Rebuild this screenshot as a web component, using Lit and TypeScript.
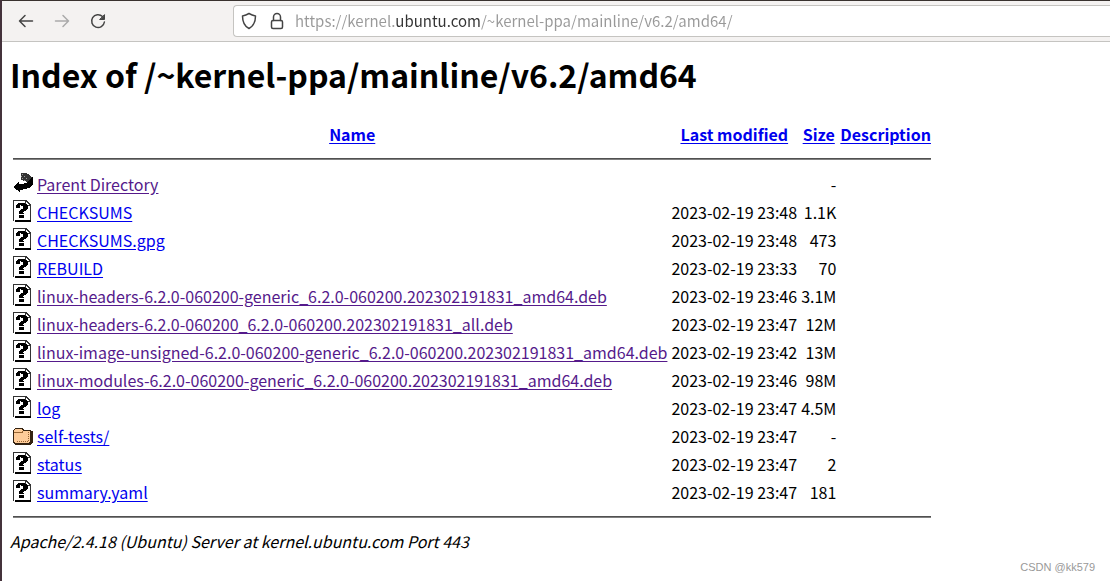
import { LitElement, html, css, svg } from "lit";
import { customElement } from "lit/decorators.js";

interface Entry {
  name: string;
  date: string;
  size: string;
  kind: "back" | "file" | "folder";
  visited?: boolean;
}

const entries: Entry[] = [
  { name: "Parent Directory", date: "", size: "-", kind: "back", visited: true },
  { name: "CHECKSUMS", date: "2023-02-19 23:48", size: "1.1K", kind: "file" },
  { name: "CHECKSUMS.gpg", date: "2023-02-19 23:48", size: "473", kind: "file" },
  { name: "REBUILD", date: "2023-02-19 23:33", size: "70", kind: "file" },
  { name: "linux-headers-6.2.0-060200-generic_6.2.0-060200.202302191831_amd64.deb", date: "2023-02-19 23:46", size: "3.1M", kind: "file", visited: true },
  { name: "linux-headers-6.2.0-060200_6.2.0-060200.202302191831_all.deb", date: "2023-02-19 23:47", size: "12M", kind: "file", visited: true },
  { name: "linux-image-unsigned-6.2.0-060200-generic_6.2.0-060200.202302191831_amd64.deb", date: "2023-02-19 23:42", size: "13M", kind: "file", visited: true },
  { name: "linux-modules-6.2.0-060200-generic_6.2.0-060200.202302191831_amd64.deb", date: "2023-02-19 23:46", size: "98M", kind: "file", visited: true },
  { name: "log", date: "2023-02-19 23:47", size: "4.5M", kind: "file" },
  { name: "self-tests/", date: "2023-02-19 23:47", size: "-", kind: "folder" },
  { name: "status", date: "2023-02-19 23:47", size: "2", kind: "file" },
  { name: "summary.yaml", date: "2023-02-19 23:47", size: "181", kind: "file" },
];

const glyphs = {
  back: svg`
    <path d="M8 1h5l4 2 2 3-2 3-3 1-2-1-4-1z" fill="#333"/>
    <path d="M9 2h1M11 4h1M9 6h1M13 6h1M11 8h1M8 4h1" stroke="#999"/>
    <path d="M0 15l6-5v2h3l6-2 4-5h1v7l-2 3-5 2-6 1v2z" fill="#000"/>`,
  file: svg`
    <path d="M0 0h13l5 5v16H0z" fill="#fff"/>
    <path d="M0 0h13v1H1v20H0z" fill="#333"/>
    <path d="M12 0h2v1h1v1h1v1h1v1h1v17h-1V6h-5V1z" fill="#333"/>
    <path d="M13 2v3h3V4h-1V3h-1V2z" fill="#fff"/>
    <path d="M2 20h16v2H2z" fill="#000"/>
    <path d="M5 3h7v1h2v1h1v4h-1v1h-1v1h-2v1h-1v1h1v1H6v-3h1v-1h1V9h2V6H8V5H7v3H3V5h1V4h1zM6 15h5v3H6z" fill="#000"/>`,
  folder: svg`
    <path d="M2 4h8v1h1v1h7v1h2v12h-1v1h-1v1H2v-1H1v-1H0V6h1V5h1z" fill="#321"/>
    <path d="M2 5h7v1h1v1h7v11h-1v1H2v-1H1V6h1z" fill="#fc9"/>
    <path d="M1 8h8V7h1" fill="none" stroke="#963"/>
    <path d="M15.500 8v10M4 17.500h12" fill="none" stroke="#963" stroke-dasharray="1 1"/>`,
};

@customElement("app-root")
export class AppRoot extends LitElement {
  static styles = css`
    :host {
      display: block;
      box-sizing: border-box;
      min-height: 100vh;
      border-left: 2px solid #44323b;
      background: #fff;
      color: #000;
      font: 16px/24px "Noto Sans CJK SC", sans-serif;
    }
    .toolbar {
      display: flex;
      align-items: center;
      box-sizing: border-box;
      height: 42px;
      padding-left: 12px;
      border-top: 1px solid #39322f;
      border-bottom: 1px solid #c5c4c1;
      background: #f4f2f1;
    }
    .nav {
      width: 24px;
      height: 24px;
      margin-right: 12px;
      padding: 0;
      border: 0;
      background: none;
      color: #444;
    }
    .nav:disabled {
      color: #aaa;
    }
    .toolbar svg {
      display: block;
      flex: none;
      fill: none;
      stroke: currentColor;
      stroke-width: 1.5;
      stroke-linecap: round;
      stroke-linejoin: round;
    }
    .address {
      display: flex;
      flex: 1;
      align-items: center;
      box-sizing: border-box;
      height: 32px;
      margin-left: 111px;
      padding-left: 7px;
      border: 1px solid #c5c4c1;
      border-right: 0;
      border-radius: 4px 0 0 4px;
      background: #fff;
      color: #444;
    }
    .shield {
      margin-right: 12px;
    }
    .lock {
      margin-right: 10px;
    }
    .url {
      flex: 1;
      min-width: 0;
      height: 24px;
      padding: 0;
      border: 0;
      outline: 0;
      font: inherit;
      font-size: 15px;
      color: transparent;
      caret-color: #333;
      /* the registered domain is darker than the rest of the address */
      background: linear-gradient(90deg, #999 101px, #333 101px 186px, #999 186px);
      background-clip: text;
      -webkit-background-clip: text;
    }
    .page {
      padding: 14px 8px;
    }
    h1 {
      margin: 0 0 27px;
      font-size: 32px;
      line-height: 36px;
    }
    table {
      border-spacing: 2px;
    }
    td,
    th {
      padding: 1px;
      white-space: nowrap;
    }
    a {
      color: #00e;
      text-underline-offset: 2px;
    }
    .visited {
      color: #551a8b;
    }
    .icon {
      vertical-align: top;
    }
    .icon svg {
      display: block;
      shape-rendering: crispEdges;
    }
    .num {
      text-align: right;
    }
    hr {
      margin: 8px 0;
      border: 0;
      border-top: 1px solid #505050;
      border-bottom: 1px solid #808080;
    }
    .server {
      font-style: italic;
    }
    .mark {
      position: absolute;
      right: 15px;
      bottom: 6px;
      color: #999;
      font: 11px/16px "Liberation Sans", sans-serif;
    }
  `;

  render() {
    return html`
      <header class="toolbar">
        <button class="nav" aria-label="Back">
          <svg width="24" height="24"><path d="M18.500 12h-13M11 6.500L5.500 12l5.500 5.500" /></svg>
        </button>
        <button class="nav" aria-label="Forward" disabled>
          <svg width="24" height="24"><path d="M5.500 12h13M13 6.500l5.500 5.500-5.500 5.500" /></svg>
        </button>
        <button class="nav" aria-label="Reload">
          <svg width="24" height="24">
            <path d="M16.500 7.500A6.400 6.400 0 1 0 18.400 13" />
            <path d="M18.500 6v4.500H14z" fill="currentColor" stroke-width="1" />
          </svg>
        </button>
        <div class="address">
          <svg class="shield" width="16" height="18" viewBox="0 0 16 18">
            <path d="M8 1.500c2 1.200 4 2 6.500 2.400 0 6-1.500 10-6.500 12.600C3 13.900 1.500 9.900 1.500 3.900 4 3.500 6 2.700 8 1.500z" />
          </svg>
          <svg class="lock" width="16" height="18" viewBox="0 0 16 18">
            <rect x="2.500" y="8.500" width="11" height="8" rx="1.500" />
            <path d="M4.500 8.500V5a3.500 3.500 0 0 1 7 0v3.500" />
          </svg>
          <input
            class="url"
            type="text"
            aria-label="Address"
            spellcheck="false"
            .value=${"https://kernel.ubuntu.com/~kernel-ppa/mainline/v6.2/amd64/"}
          />
        </div>
      </header>
      <main class="page">
        <h1>Index of /~kernel-ppa/mainline/v6.2/amd64</h1>
        <table>
          <thead>
            <tr>
              <th></th>
              <th><a href="#name">Name</a></th>
              <th><a href="#modified">Last modified</a></th>
              <th><a href="#size">Size</a></th>
              <th><a href="#description">Description</a></th>
            </tr>
            <tr><th colspan="5"><hr /></th></tr>
          </thead>
          <tbody>
            ${entries.map(
              (e) => html`<tr>
                <td class="icon"><svg width="20" height="22" aria-hidden="true">${glyphs[e.kind]}</svg></td>
                <td><a class=${e.visited ? "visited" : ""} href="#entry">${e.name}</a></td>
                <td class="num">${e.date}</td>
                <td class="num">${e.size}</td>
                <td></td>
              </tr>`
            )}
            <tr><th colspan="5"><hr /></th></tr>
          </tbody>
        </table>
        <address class="server">Apache/2.4.18 (Ubuntu) Server at kernel.ubuntu.com Port 443</address>
      </main>
      <div class="mark">CSDN @kk579</div>
    `;
  }
}
